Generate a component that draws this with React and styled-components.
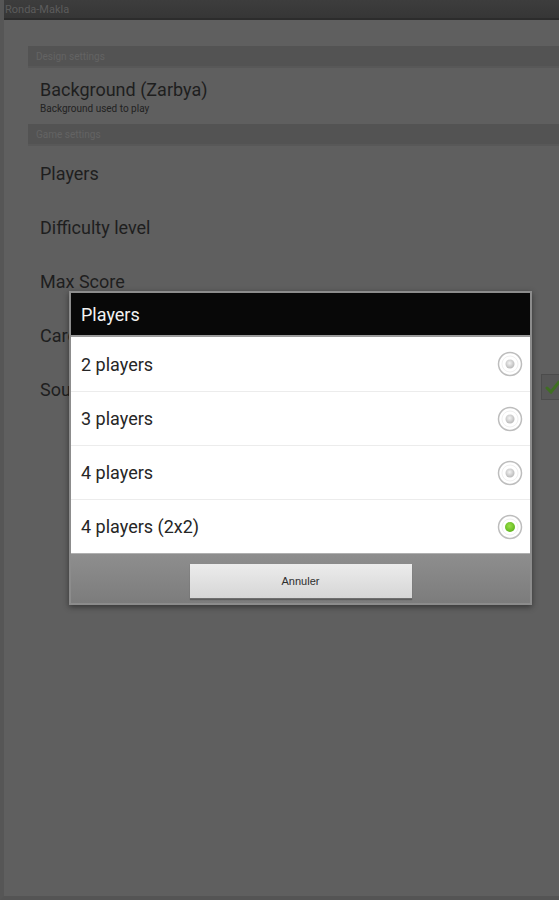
import styled, { createGlobalStyle } from 'styled-components';

const GlobalStyle = createGlobalStyle`
  html, body {
    margin: 0;
    padding: 0;
    background: #5f5f5f;
    font-family: Roboto, "Liberation Sans", sans-serif;
  }
`;

const Screen = styled.div`
  position: relative;
  width: 559px;
  height: 900px;
  overflow: hidden;
  display: flex;
  flex-direction: column;
  background: #5f5f5f;
  border-left: 4px solid #565656;
  border-bottom: 4px solid #545454;
  box-sizing: border-box;
`;

const TitleBar = styled.div`
  height: 18px;
  margin-left: -4px;
  padding-left: 5px;
  display: flex;
  align-items: center;
  background: linear-gradient(#3d3d3d, #363636);
  border-bottom: 2px solid #2c2c2c;
  color: #5c5c5c;
  font-size: 11px;
`;

const Content = styled.div`
  display: flex;
  flex-direction: column;
  padding: 26px 0 0 24px;
`;

const SectionHeader = styled.div`
  height: 20px;
  display: flex;
  align-items: center;
  padding-left: 8px;
  background: #535353;
  border-bottom: 2px solid #585858;
  color: #636363;
  font-size: 10px;
`;

const Item = styled.div`
  position: relative;
  height: ${p => (p.$sub ? 56 : 54)}px;
  display: flex;
  flex-direction: column;
  justify-content: center;
  padding-left: 12px;
`;

const ItemTitle = styled.div`
  color: #1e1e1e;
  font-size: 18px;
`;

const ItemSub = styled.div`
  color: #222;
  font-size: 10px;
  margin-top: 3px;
`;

const CheckBox = styled.div`
  position: absolute;
  right: -6px;
  top: 12px;
  width: 22px;
  height: 24px;
  border: 1px solid #4c4c4c;
  background: #575757;
  display: flex;
  align-items: center;
  justify-content: center;
`;

const Dialog = styled.div`
  position: absolute;
  left: 65px;
  top: 291px;
  width: 463px;
  padding: 2px;
  box-sizing: border-box;
  background: #8c8c8c;
  box-shadow: 0 2px 6px rgba(0, 0, 0, 0.45);
  display: flex;
  flex-direction: column;
`;

const DialogTitle = styled.div`
  height: 42px;
  display: flex;
  align-items: center;
  padding-left: 10px;
  background: #080808;
  border-bottom: 2px solid #9a9a9a;
  color: #f2f2f2;
  font-size: 18px;
`;

const List = styled.div`
  background: #fff;
  display: flex;
  flex-direction: column;
`;

const Option = styled.div`
  height: 54px;
  display: flex;
  align-items: center;
  justify-content: space-between;
  padding: 0 7px 0 10px;
  border-top: ${p => (p.$first ? 'none' : '1px solid #ececec')};
  box-sizing: border-box;
  color: #262626;
  font-size: 18px;
`;

const ButtonBar = styled.div`
  height: 50px;
  display: flex;
  align-items: flex-start;
  justify-content: center;
  padding-top: 10px;
  box-sizing: border-box;
  background: linear-gradient(#8e8e8e, #7c7c7c);
  border-top: 1px solid #b0b0b0;
`;

const Button = styled.div`
  width: 222px;
  height: 34px;
  display: flex;
  align-items: center;
  justify-content: center;
  background: linear-gradient(#ececec, #d6d6d6);
  border-bottom: 1px solid #6e6e6e;
  box-shadow: 0 1px 1px rgba(0, 0, 0, 0.25);
  color: #2e2e2e;
  font-size: 11px;
  font-family: "Liberation Sans", sans-serif;
`;

const Radio = ({ checked }) => (
  <svg width="26" height="26" viewBox="0 0 26 26">
    <defs>
      <radialGradient id="off" cx="0.45" cy="0.4" r="0.6">
        <stop offset="0" stopColor="#f4f4f4" />
        <stop offset="1" stopColor="#b8b8b8" />
      </radialGradient>
      <radialGradient id="on" cx="0.45" cy="0.4" r="0.6">
        <stop offset="0" stopColor="#9be04a" />
        <stop offset="1" stopColor="#5fb51c" />
      </radialGradient>
    </defs>
    <circle cx="13" cy="13" r="11.5" fill="#fff" stroke="#bdbdbd" strokeWidth="1.5" />
    <circle cx="13" cy="13" r="8" fill="none" stroke="#f0f0f0" strokeWidth="1" />
    <circle cx="13" cy="13" r={checked ? 5 : 4.5} fill={checked ? 'url(#on)' : 'url(#off)'} />
  </svg>
);

const options = ['2 players', '3 players', '4 players', '4 players (2x2)'];

export default function App() {
  return (
    <>
      <GlobalStyle />
      <Screen>
        <TitleBar>Ronda-Makla</TitleBar>
        <Content>
          <SectionHeader>Design settings</SectionHeader>
          <Item $sub>
            <ItemTitle>Background (Zarbya)</ItemTitle>
            <ItemSub>Background used to play</ItemSub>
          </Item>
          <SectionHeader>Game settings</SectionHeader>
          <Item><ItemTitle>Players</ItemTitle></Item>
          <Item><ItemTitle>Difficulty level</ItemTitle></Item>
          <Item><ItemTitle>Max Score</ItemTitle></Item>
          <Item><ItemTitle>Cards</ItemTitle></Item>
          <Item>
            <ItemTitle>Sound</ItemTitle>
            <CheckBox>
              <svg width="16" height="14" viewBox="0 0 16 14">
                <path d="M2 8 L6 12 L14 2" fill="none" stroke="#3f6e22" strokeWidth="3" strokeLinecap="round" />
              </svg>
            </CheckBox>
          </Item>
        </Content>
        <Dialog>
          <DialogTitle>Players</DialogTitle>
          <List>
            {options.map((o, i) => (
              <Option key={o} $first={i === 0}>
                {o}
                <Radio checked={i === 3} />
              </Option>
            ))}
          </List>
          <ButtonBar>
            <Button>Annuler</Button>
          </ButtonBar>
        </Dialog>
      </Screen>
    </>
  );
}
